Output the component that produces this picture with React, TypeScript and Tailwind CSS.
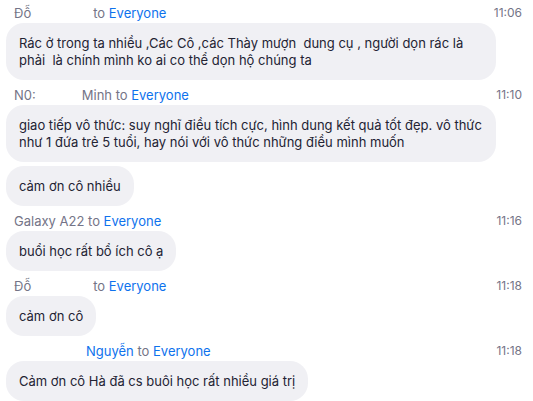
const font = { fontFamily: 'Inter, "Liberation Sans", Arial, sans-serif' }

type Msg = {
  from: React.ReactNode
  time: string
  texts: string[]
}

function Gap({ w }: { w: number }) {
  return <span className="inline-block" style={{ width: w }} />
}

const messages: Msg[] = [
  {
    from: (
      <>
        <span>Đỗ</span>
        <Gap w={62} />
      </>
    ),
    time: '11:06',
    texts: [
      'Rác ở trong ta nhiều ,Các Cô ,các Thày mượn  dung cụ , người dọn rác là phải  là chính mình ko ai co thể dọn hộ chúng ta',
    ],
  },
  {
    from: (
      <>
        <span>N0:</span>
        <Gap w={46} />
        <span>Minh </span>
      </>
    ),
    time: '11:10',
    texts: [
      'giao tiếp vô thức: suy nghĩ điều tích cực, hình dung kết quả tốt đẹp. vô thức như 1 đứa trẻ 5 tuổi, hay nói với vô thức những điều mình muốn',
      'cảm ơn cô nhiều',
    ],
  },
  {
    from: <span>Galaxy A22 </span>,
    time: '11:16',
    texts: ['buổi học rất bổ ích cô ạ'],
  },
  {
    from: (
      <>
        <span>Đỗ</span>
        <Gap w={62} />
      </>
    ),
    time: '11:18',
    texts: ['cảm ơn cô'],
  },
  {
    from: (
      <>
        <Gap w={72} />
        <span className="text-[#0e72ed]">Nguyễn </span>
      </>
    ),
    time: '11:18',
    texts: ['Cảm ơn cô Hà đã cs buôi học rất nhiều giá trị'],
  },
]

export default function App() {
  return (
    <div className="w-[533px] h-[401px] bg-white overflow-hidden pt-[5px]" style={font}>
      <div className="flex flex-col gap-[7px]">
        {messages.map((m, i) => (
          <div key={i} className="flex flex-col">
            <div className="flex items-center justify-between h-[16px] pl-[14px] pr-[11px] mb-[2px]">
              <div className="text-[13px] leading-[16px] text-[#747487] whitespace-pre">
                {m.from}
                <span>to </span>
                <span className="text-[#0e72ed]">Everyone</span>
              </div>
              <div className="text-[12px] leading-[16px] text-[#747487]">{m.time}</div>
            </div>
            <div className="flex flex-col items-start gap-[4px] pl-[6px]">
              {m.texts.map((t, j) => (
                <div
                  key={j}
                  className="max-w-[490px] bg-[#f0f0f4] rounded-[18px] px-[13px] py-[11.5px] text-[13px] leading-[17px] text-[#232333] whitespace-pre-wrap"
                >
                  {t}
                </div>
              ))}
            </div>
          </div>
        ))}
      </div>
      <div className="mt-[1px] h-px bg-[#ececef]" />
    </div>
  )
}
